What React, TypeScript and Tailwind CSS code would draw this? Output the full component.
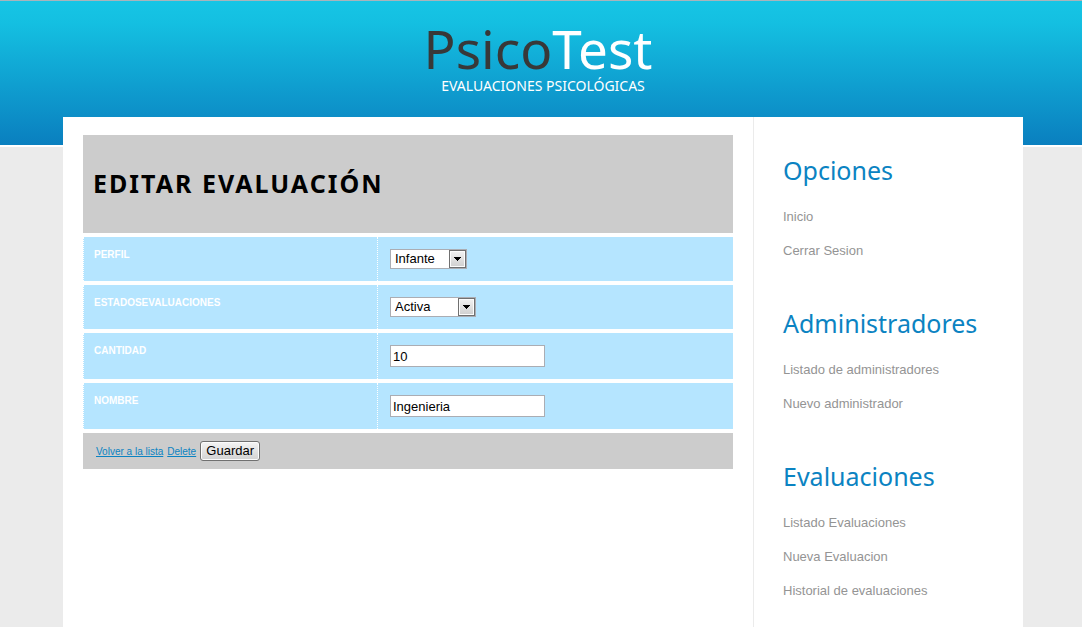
import React from "react";

type MenuSection = { title: string; links: string[] };

const menu: MenuSection[] = [
  { title: "Opciones", links: ["Inicio", "Cerrar Sesion"] },
  { title: "Administradores", links: ["Listado de administradores", "Nuevo administrador"] },
  {
    title: "Evaluaciones",
    links: ["Listado Evaluaciones", "Nueva Evaluacion", "Historial de evaluaciones"],
  },
];

function Row({ id, label, children }: { id: string; label: string; children: React.ReactNode }) {
  return (
    <div className="flex bg-[#b5e5ff]">
      <div className="w-[294px] shrink-0 border-l border-dotted border-white px-[10px] py-3">
        <label htmlFor={id} className="block text-[10px] font-bold uppercase leading-3 text-white">
          {label}
        </label>
      </div>
      <div className="flex-1 border-l border-dotted border-white p-3">{children}</div>
    </div>
  );
}

function Select({ id, options, width }: { id: string; options: string[]; width: string }) {
  return (
    <div className={`relative h-5 ${width}`}>
      <select
        id={id}
        className="block h-5 w-full appearance-none border border-[#abadb3] bg-white pl-1 text-[13px] leading-[18px] text-black"
      >
        {options.map((o) => (
          <option key={o}>{o}</option>
        ))}
      </select>
      <span className="pointer-events-none absolute inset-y-px right-px flex w-[17px] items-center justify-center border border-[#707070] bg-linear-to-b from-[#f2f2f2] to-[#cfcfcf] shadow-[inset_0_0_0_1px_#fcfcfc]">
        <svg width="7" height="4" viewBox="0 0 7 4" shapeRendering="crispEdges" aria-hidden="true">
          <path d="M0 0h7v1h-1v1h-1v1h-1v1h-1v-1h-1v-1h-1v-1h-1z" fill="#000" />
        </svg>
      </span>
    </div>
  );
}

function TextField({ id, value }: { id: string; value: string }) {
  return (
    <input
      id={id}
      type="text"
      defaultValue={value}
      className="block h-[22px] w-[155px] border border-[#abadb3] bg-white px-0.5 text-[13px] text-black"
    />
  );
}

export default function App() {
  return (
    <div className="flex min-h-screen flex-col bg-[#ebebeb] bg-[linear-gradient(to_bottom,#a9b4bb_0px,#a9b4bb_1px,#16c5e5_1px,#14bfe1_24px,#0a7fbf_145px,#ffffff_145px)] bg-[length:100%_147px] bg-no-repeat pl-1 font-['Liberation_Sans',Arial,sans-serif]">
      <header className="h-[117px] pt-5 text-center font-['Noto_Sans','Open_Sans',sans-serif]">
        <h1 className="pr-2.5 text-[53px] leading-[58px] text-[#383838]">
          Psico<span className="text-white">Test</span>
        </h1>
        <p className="text-sm leading-4 text-white">EVALUACIONES PSICOLÓGICAS</p>
      </header>

      <div className="mx-auto flex w-full max-w-[960px] flex-1 bg-white">
        <main className="flex-1 px-5 pt-[18px]">
          <form className="flex flex-col gap-1" onSubmit={(e) => e.preventDefault()}>
            <h2 className="bg-[#cccccc] px-[10px] pt-8 pb-[34px] font-['Noto_Sans','Open_Sans',sans-serif] text-[25px] font-bold uppercase leading-8 tracking-[2px] text-black">
              Editar Evaluación
            </h2>
            <Row id="perfil" label="Perfil">
              <Select id="perfil" options={["Infante"]} width="w-[77px]" />
            </Row>
            <Row id="estado" label="EstadosEvaluaciones">
              <Select id="estado" options={["Activa"]} width="w-[86px]" />
            </Row>
            <Row id="cantidad" label="Cantidad">
              <TextField id="cantidad" value="10" />
            </Row>
            <Row id="nombre" label="Nombre">
              <TextField id="nombre" value="Ingenieria" />
            </Row>
            <div className="flex items-baseline gap-1 bg-[#cccccc] px-[13px] py-2 text-[10px] leading-3 text-[#0b83c2]">
              <a href="#lista" className="underline">
                Volver a la lista
              </a>
              <a href="#delete" className="underline">
                Delete
              </a>
              <button
                type="submit"
                className="h-5 w-[60px] rounded-[3px] border border-[#707070] bg-linear-to-b from-[#f4f4f4] to-[#d2d2d2] text-[13px] leading-[18px] text-black shadow-[inset_0_0_0_1px_#fcfcfc]"
              >
                Guardar
              </button>
            </div>
          </form>
        </main>

        <nav className="flex w-[270px] shrink-0 flex-col gap-[39px] border-l border-[#ebebeb] pt-[37px] pb-4 pl-[29px]">
          {menu.map((section) => (
            <section key={section.title}>
              <h2 className="mb-3.5 font-['Noto_Sans','Open_Sans',sans-serif] text-[25px] leading-8 text-[#0b83c2]">
                {section.title}
              </h2>
              <ul className="text-[13px] leading-[34px] text-[#949494]">
                {section.links.map((link) => (
                  <li key={link}>
                    <a href="#menu">{link}</a>
                  </li>
                ))}
              </ul>
            </section>
          ))}
        </nav>
      </div>
    </div>
  );
}
